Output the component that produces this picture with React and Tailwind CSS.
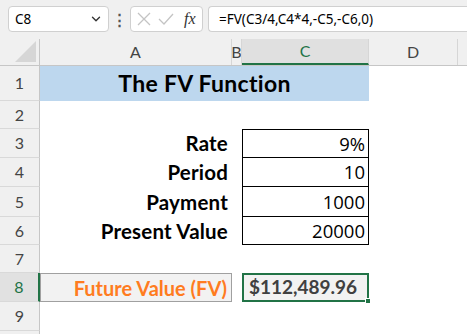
import { ChevronDown } from 'lucide-react';

const rows = [
  { n: 1, h: 'h-[35px]' },
  { n: 2, h: 'h-[28px]' },
  { n: 3, h: 'h-[29px]' },
  { n: 4, h: 'h-[29px]' },
  { n: 5, h: 'h-[30px]' },
  { n: 6, h: 'h-[28px]' },
  { n: 7, h: 'h-[28px]' },
  { n: 8, h: 'h-[29px]' },
  { n: 9, h: 'h-[29px]' },
  { n: 10, h: 'h-[29px]' },
];

const inputs = {
  3: ['Rate', '9%'],
  4: ['Period', '10'],
  5: ['Payment', '1000'],
  6: ['Present Value', '20000'],
};

function RowHeader({ n }) {
  const active = n === 8;
  return (
    <div
      className={`w-[40px] shrink-0 flex items-center justify-center border-b border-[#d9d9d9] text-[16px] ${
        active
          ? 'bg-[#e1e1e1] text-[#217346] border-r-2 border-r-[#217346]'
          : 'bg-[#f0f0f0] text-[#444] border-r border-r-[#c6c6c6]'
      }`}
    >
      {n < 10 ? n : ''}
    </div>
  );
}

function Row({ n, h }) {
  if (n === 1) {
    return (
      <div className={`flex ${h}`}>
        <RowHeader n={n} />
        <div className="w-[329px] bg-[#bdd7ee] flex items-center justify-center font-bold text-[23px] tracking-[0.3px] text-black">
          The FV Function
        </div>
      </div>
    );
  }
  if (inputs[n]) {
    const [label, value] = inputs[n];
    return (
      <div className={`flex ${h}`}>
        <RowHeader n={n} />
        <div className="w-[192px] flex items-center justify-end pr-[4px] font-bold text-[20.5px] tracking-[0.2px] text-black">
          {label}
        </div>
        <div className="w-[10px]" />
        <div
          className={`w-[127px] flex items-center justify-end pr-[3px] text-[18.5px] text-black border-x border-b border-black ${
            n === 3 ? 'border-t' : ''
          }`}
          style={{ fontFamily: '"Open Sans", sans-serif' }}
        >
          {value}
        </div>
      </div>
    );
  }
  if (n === 8) {
    return (
      <div className={`flex ${h}`}>
        <RowHeader n={n} />
        <div className="w-[192px] flex items-center justify-end pr-[4px] bg-[#f2f2f2] border border-[#a0a0a0] font-bold text-[20px] text-[#ff7c1f]">
          Future Value (FV)
        </div>
        <div className="w-[10px]" />
        <div className="relative w-[127px] flex items-center pl-[5px] bg-[#f2f2f2] border-2 border-[#217346] font-bold text-[19px] text-[#404040]">
          $112,489.96
          <span className="absolute -right-[4px] -bottom-[4px] w-[6px] h-[6px] bg-[#217346] border border-white" />
        </div>
      </div>
    );
  }
  return (
    <div className={`flex ${h}`}>
      <RowHeader n={n} />
    </div>
  );
}

export default function App() {
  return (
    <div className="w-[467px] h-[334px] overflow-hidden bg-white" style={{ fontFamily: 'Lato, "Open Sans", sans-serif' }}>
      {/* formula bar */}
      <div className="h-[39px] bg-[#f0f0f0] flex items-start pt-[6px]" style={{ fontFamily: '"Noto Sans", sans-serif' }}>
        <div className="ml-[8px] w-[101px] h-[26px] bg-white border border-[#d0d0d0] rounded-[4px] flex items-center pl-[6px] pr-[5px] text-[13.5px] text-black">
          <span className="flex-1">C8</span>
          <ChevronDown className="w-[14px] h-[14px] text-[#333]" strokeWidth={2.4} />
        </div>
        <div className="w-[21px] h-[26px] flex items-center justify-center text-[#555] text-[15px] font-bold">⋮</div>
        <div className="w-[73px] h-[26px] bg-white border border-[#d0d0d0] rounded-[4px] flex items-center pl-[6px] gap-[7px]">
          <svg width="14" height="14" viewBox="0 0 14 14" stroke="#c4c4c4" strokeWidth="1.3" fill="none">
            <path d="M1 1 L13 13 M13 1 L1 13" />
          </svg>
          <svg width="16" height="12" viewBox="0 0 16 12" stroke="#c4c4c4" strokeWidth="1.3" fill="none">
            <path d="M1 6 L6 11 L15 1" />
          </svg>
          <span className="ml-[3px] italic text-[16px] text-[#333]" style={{ fontFamily: '"Liberation Serif", serif' }}>
            fx
          </span>
        </div>
        <div className="ml-[5px] flex-1 h-[26px] bg-white border border-[#d0d0d0] border-r-0 rounded-l-[4px] flex items-center pl-[10px] text-[13.5px] text-black">
          =FV(C3/4,C4*4,-C5,-C6,0)
        </div>
      </div>

      {/* column headers */}
      <div className="flex h-[27px] bg-[#f0f0f0] border-b border-[#c6c6c6] text-[16px] text-[#444]">
        <div className="w-[40px] shrink-0 border-r border-[#c6c6c6] flex items-end justify-end pr-[3px] pb-[3px]">
          <svg width="21" height="21" viewBox="0 0 21 21">
            <path d="M21 0 L21 21 L0 21 Z" fill="#d6d6d6" />
          </svg>
        </div>
        <div className="w-[192px] border-r border-[#d6d6d6] flex items-center justify-center">A</div>
        <div className="w-[10px] border-r border-[#d6d6d6] flex items-center justify-center overflow-hidden">B</div>
        <div className="w-[127px] bg-[#e0e0e0] border-b-2 border-[#217346] border-r border-r-[#d6d6d6] flex items-center justify-center text-[#217346]">
          C
        </div>
        <div className="w-[89px] border-r border-[#d6d6d6] flex items-center justify-center">D</div>
        <div className="flex-1" />
      </div>

      {rows.map((r) => (
        <Row key={r.n} {...r} />
      ))}
    </div>
  );
}
